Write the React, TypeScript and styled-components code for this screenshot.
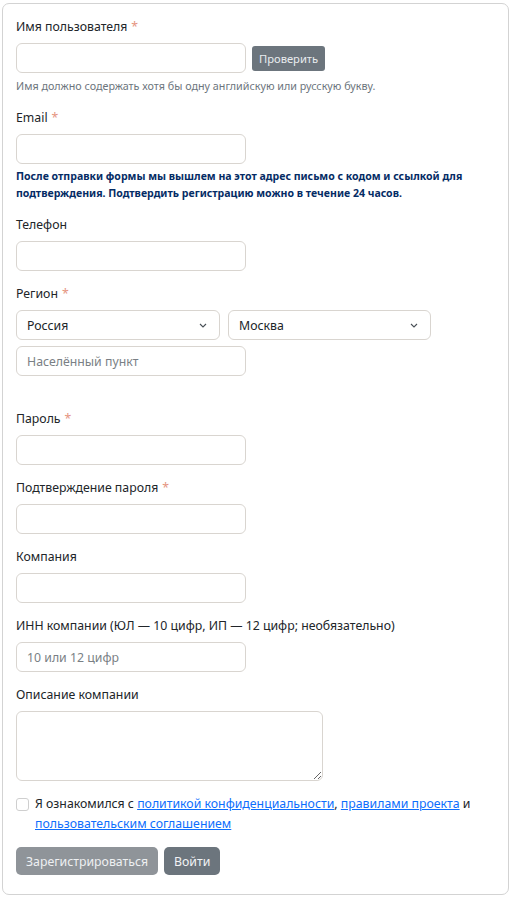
import styled, { createGlobalStyle } from 'styled-components';

const GlobalStyle = createGlobalStyle`
  * {
    box-sizing: border-box;
  }
  body {
    margin: 0;
    background: #fff;
    font-family: 'Noto Sans', 'Open Sans', sans-serif;
    color: #212529;
  }
`;

const Card = styled.form`
  margin: 3px 6px 7px 2px;
  padding: 13px 13px 19px;
  border: 1px solid #d3d3d3;
  border-radius: 7px;
  background: #fff;
`;

const Group = styled.div<{ $extra?: number }>`
  margin-bottom: ${({ $extra }) => 13 + ($extra ?? 0)}px;
`;

const Label = styled.label`
  display: block;
  margin-bottom: 6px;
  font-size: 12.3px;
  line-height: 20px;
  color: #212529;
`;

const Required = styled.span`
  margin-left: 4px;
  color: #e5947f;
`;

const Row = styled.div`
  display: flex;
  align-items: center;
  gap: 6px;
`;

const Input = styled.input<{ $width?: number }>`
  display: block;
  width: ${({ $width }) => $width ?? 230}px;
  height: 30px;
  padding: 0 10px;
  border: 1px solid #d9d5d0;
  border-radius: 6px;
  font: inherit;
  font-size: 12.3px;
  color: #212529;
  background: #fff;

  &::placeholder {
    color: #7a7f85;
  }
`;

const CheckButton = styled.button`
  height: 25px;
  padding: 0 7px;
  border: none;
  border-radius: 3px;
  background: #6c757d;
  color: #e9ecef;
  font: inherit;
  font-size: 11.2px;
`;

const Help = styled.div`
  margin-top: 5px;
  font-size: 10.75px;
  line-height: 17px;
  color: #6c757d;
`;

const Notice = styled.div`
  margin-top: 4px;
  font-size: 10.55px;
  font-weight: 700;
  line-height: 17px;
  color: #052c65;
`;

const SelectRow = styled.div`
  display: flex;
  gap: 8px;
  margin-bottom: 6px;
`;

const Select = styled.div<{ $width: number }>`
  display: flex;
  align-items: center;
  justify-content: space-between;
  width: ${({ $width }) => $width}px;
  height: 30px;
  padding: 0 12px 0 10px;
  border: 1px solid #d9d5d0;
  border-radius: 6px;
  font-size: 12.3px;
  color: #212529;
`;

const TextArea = styled.textarea`
  display: block;
  width: 307px;
  height: 70px;
  border: 1px solid #d9d5d0;
  border-radius: 6px;
  font: inherit;
  font-size: 12.3px;
`;

const Agree = styled.div`
  display: flex;
  gap: 6px;
  margin-bottom: 13px;
  font-size: 12.3px;
  line-height: 20px;
`;

const Box = styled.span`
  flex-shrink: 0;
  width: 13px;
  height: 13px;
  margin-top: 4px;
  border: 1px solid #cfcfcf;
  border-radius: 3px;
`;

const Link = styled.a`
  color: #0d6efd;
  text-decoration: underline;
`;

const Actions = styled.div`
  display: flex;
  gap: 6px;
`;

const Button = styled.button<{ $disabled?: boolean }>`
  height: 28px;
  padding: 0 10px;
  border: none;
  border-radius: 5px;
  background: ${({ $disabled }) => ($disabled ? '#8f9499' : '#6c757d')};
  color: ${({ $disabled }) => ($disabled ? '#eef0f2' : '#f1f3f5')};
  font: inherit;
  font-size: 12.3px;
`;

const Chevron = () => (
  <svg width="8" height="5" viewBox="0 0 8 5" fill="none">
    <path d="M1 1l3 3 3-3" stroke="#495057" strokeWidth="1.1" />
  </svg>
);

const Field = ({
  label,
  required,
  placeholder,
}: {
  label: string;
  required?: boolean;
  placeholder?: string;
}) => (
  <Group>
    <Label>
      {label}
      {required && <Required>*</Required>}
    </Label>
    <Input placeholder={placeholder} />
  </Group>
);

export default function App() {
  return (
    <>
      <GlobalStyle />
      <Card>
        <Group>
          <Label>
            Имя пользователя<Required>*</Required>
          </Label>
          <Row>
            <Input />
            <CheckButton type="button">Проверить</CheckButton>
          </Row>
          <Help>Имя должно содержать хотя бы одну английскую или русскую букву.</Help>
        </Group>

        <Group>
          <Label>
            Email<Required>*</Required>
          </Label>
          <Input />
          <Notice>
            После отправки формы мы вышлем на этот адрес письмо с кодом и ссылкой для
            подтверждения. Подтвердить регистрацию можно в течение 24 часов.
          </Notice>
        </Group>

        <Field label="Телефон" />

        <Group $extra={20}>
          <Label>
            Регион<Required>*</Required>
          </Label>
          <SelectRow>
            <Select $width={204}>
              Россия
              <Chevron />
            </Select>
            <Select $width={203}>
              Москва
              <Chevron />
            </Select>
          </SelectRow>
          <Input placeholder="Населённый пункт" />
        </Group>

        <Field label="Пароль" required />
        <Field label="Подтверждение пароля" required />
        <Field label="Компания" />
        <Field
          label="ИНН компании (ЮЛ — 10 цифр, ИП — 12 цифр; необязательно)"
          placeholder="10 или 12 цифр"
        />

        <Group>
          <Label>Описание компании</Label>
          <TextArea />
        </Group>

        <Agree>
          <Box />
          <span>
            Я ознакомился с <Link href="#">политикой конфиденциальности</Link>,{' '}
            <Link href="#">правилами проекта</Link> и{' '}
            <Link href="#">пользовательским соглашением</Link>
          </span>
        </Agree>

        <Actions>
          <Button type="button" $disabled>
            Зарегистрироваться
          </Button>
          <Button type="button">Войти</Button>
        </Actions>
      </Card>
    </>
  );
}
